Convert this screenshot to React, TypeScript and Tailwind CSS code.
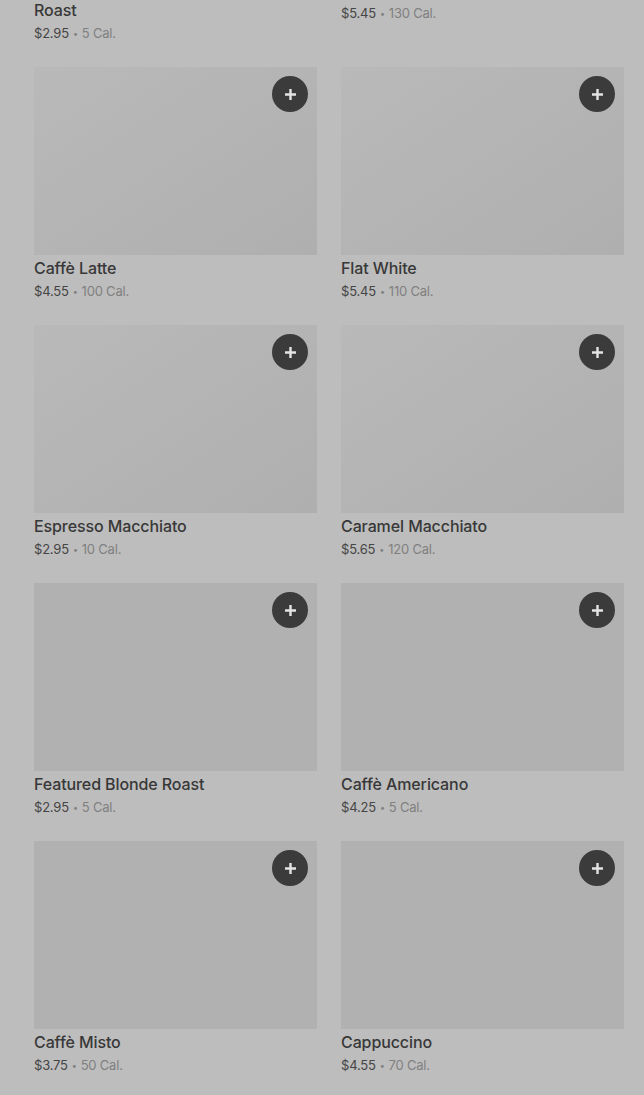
import React from "react";

type Item = { name: string; price: string; cal: string; grad?: boolean };

const items: Item[] = [
  { name: "Featured Starbucks® Dark Roast\nRoast", price: "$2.95", cal: "5 Cal.", grad: true },
  { name: "Iced Brown Sugar Oatmilk Latte", price: "$5.45", cal: "130 Cal.", grad: true },
  { name: "Caffè Latte", price: "$4.55", cal: "100 Cal.", grad: true },
  { name: "Flat White", price: "$5.45", cal: "110 Cal.", grad: true },
  { name: "Espresso Macchiato", price: "$2.95", cal: "10 Cal.", grad: true },
  { name: "Caramel Macchiato", price: "$5.65", cal: "120 Cal.", grad: true },
  { name: "Featured Blonde Roast", price: "$2.95", cal: "5 Cal." },
  { name: "Caffè Americano", price: "$4.25", cal: "5 Cal." },
  { name: "Caffè Misto", price: "$3.75", cal: "50 Cal." },
  { name: "Cappuccino", price: "$4.55", cal: "70 Cal." },
];

function Card({ item }: { item: Item }) {
  return (
    <div className="flex flex-col">
      <div
        className={
          "relative h-[188px] w-full " +
          (item.grad
            ? "bg-gradient-to-br from-[#b9b9b9] via-[#b4b4b4] to-[#afafaf]"
            : "bg-[#b1b1b1]")
        }
      >
        <button className="absolute right-[9px] top-[9px] flex h-[36px] w-[36px] items-center justify-center rounded-full bg-[#3b3b3b]">
          <svg width="13" height="13" viewBox="0 0 13 13">
            <path d="M6.5 1v11M1 6.5h11" stroke="#e4e4e4" strokeWidth="2.4" />
          </svg>
        </button>
      </div>
      <div className="mt-[3px] whitespace-pre-line text-[16px] font-medium leading-[20px] tracking-[-0.1px] text-[#383838]">
        {item.name}
      </div>
      <div className="mt-[3px] flex h-[20px] items-center text-[13px] leading-[20px] tracking-[-0.2px]">
        <span className="text-[#454545]">{item.price}</span>
        <span className="mx-[4px] text-[9px] leading-none text-[#808080]">•</span>
        <span className="text-[#808080]">{item.cal}</span>
      </div>
    </div>
  );
}

export default function App() {
  return (
    <div
      className="h-[1095px] w-full overflow-hidden bg-[#bdbdbd]"
      style={{ fontFamily: "Inter, 'Noto Sans', sans-serif" }}
    >
      <div className="-mt-[211px] grid grid-cols-2 items-start gap-x-[24px] gap-y-[24px] pl-[34px] pr-[20px]">
        {items.map((it, i) => (
          <Card key={i} item={it} />
        ))}
      </div>
    </div>
  );
}
